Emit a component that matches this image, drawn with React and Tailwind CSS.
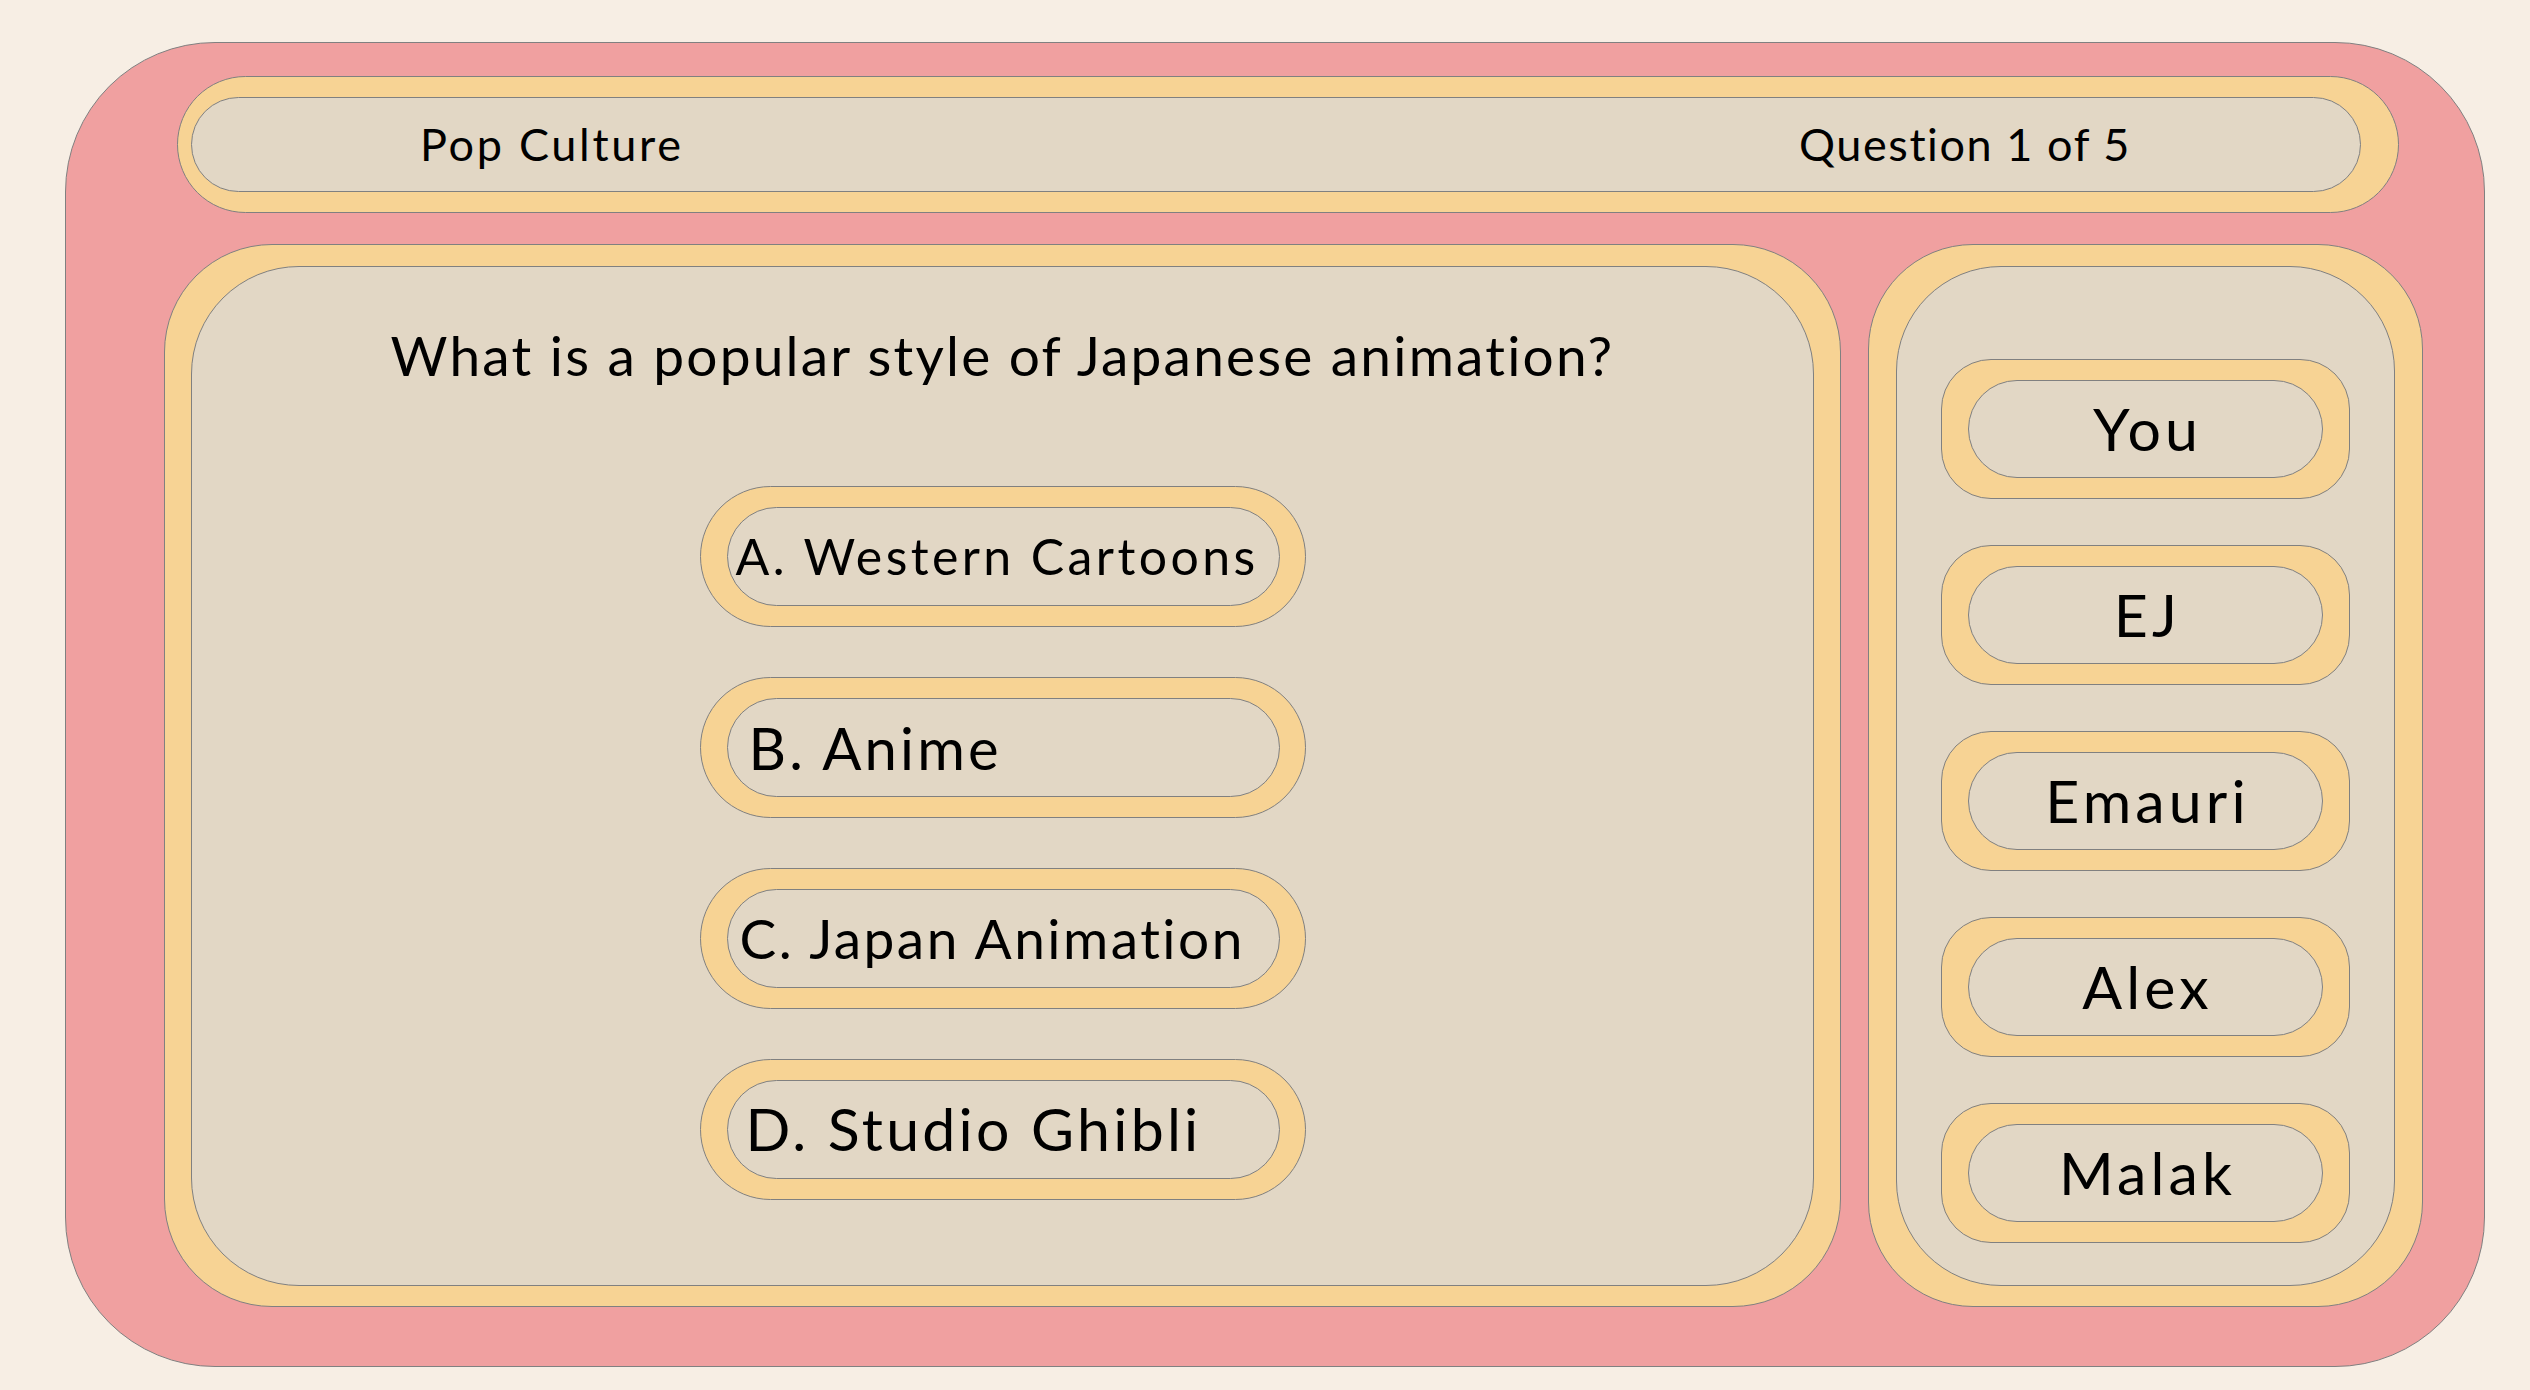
import React from "react";

const answers = [
  { label: "A. Western Cartoons", size: "text-[50px] tracking-[0.068em]", pad: "pl-[8px]" },
  { label: "B. Anime", size: "text-[58px] tracking-[0.055em]", pad: "pl-[21px]" },
  { label: "C. Japan Animation", size: "text-[55px] tracking-[0.045em]", pad: "pl-[12px]" },
  { label: "D. Studio Ghibli", size: "text-[59px] tracking-[0.055em]", pad: "pl-[18px]" },
];

const players = ["You", "EJ", "Emauri", "Alex", "Malak"];

const AnswerPill = ({ answer }) => (
  <button className="block w-[606px] h-[141px] rounded-full border border-[#808080] bg-[#f7d394] pl-[26px] pr-[25px] py-[20px] text-left">
    <div className={`h-full rounded-full border border-[#808080] bg-[#e2d7c5] flex items-center ${answer.pad}`}>
      <span className={`${answer.size} whitespace-nowrap`}>{answer.label}</span>
    </div>
  </button>
);

const PlayerPill = ({ name }) => (
  <div className="w-[409px] h-[140px] shrink-0 rounded-[50px] border border-[#808080] bg-[#f7d394] px-[26px] py-[20px]">
    <div className="h-full rounded-full border border-[#808080] bg-[#e2d7c5] flex items-center justify-center pl-[4px] text-[59px] tracking-[0.07em]">
      {name}
    </div>
  </div>
);

export default function App() {
  return (
    <div className="w-[2530px] h-[1390px] bg-[#f7eee4] pl-[65px] pt-[42px] font-['Lato',sans-serif] text-black">
      <div className="w-[2420px] h-[1325px] rounded-[150px] border border-[#808080] bg-[#f0a0a0] flex flex-col">
        {/* header bar */}
        <div className="ml-[111px] mt-[33px] w-[2222px] h-[137px] rounded-full border border-[#808080] bg-[#f7d394] pl-[13px] pr-[37px] py-[20px]">
          <div className="h-full rounded-full border border-[#808080] bg-[#e2d7c5] flex items-center justify-between pl-[228px] pr-[229px] text-[45px]">
            <span className="tracking-[0.06em]">Pop Culture</span>
            <span className="tracking-[0.035em]">Question 1 of 5</span>
          </div>
        </div>

        <div className="ml-[98px] mt-[31px] flex gap-[27px]">
          {/* question panel */}
          <div className="w-[1677px] h-[1063px] rounded-[108px] border border-[#808080] bg-[#f7d394] px-[26px] pt-[21px] pb-[20px]">
            <div className="h-full rounded-[108px] border border-[#808080] bg-[#e2d7c5] flex flex-col items-center pt-[47px]">
              <p className="text-[55px] tracking-[0.04em]">What is a popular style of Japanese animation?</p>
              <div className="mt-[89px] flex flex-col gap-[50px]">
                {answers.map((a) => (
                  <AnswerPill key={a.label} answer={a} />
                ))}
              </div>
            </div>
          </div>

          {/* players panel */}
          <div className="w-[555px] h-[1063px] rounded-[105px] border border-[#808080] bg-[#f7d394] px-[27px] pt-[21px] pb-[20px]">
            <div className="h-full rounded-[105px] border border-[#808080] bg-[#e2d7c5] flex flex-col items-center pt-[92px] gap-[46px]">
              {players.map((p) => (
                <PlayerPill key={p} name={p} />
              ))}
            </div>
          </div>
        </div>
      </div>
    </div>
  );
}
